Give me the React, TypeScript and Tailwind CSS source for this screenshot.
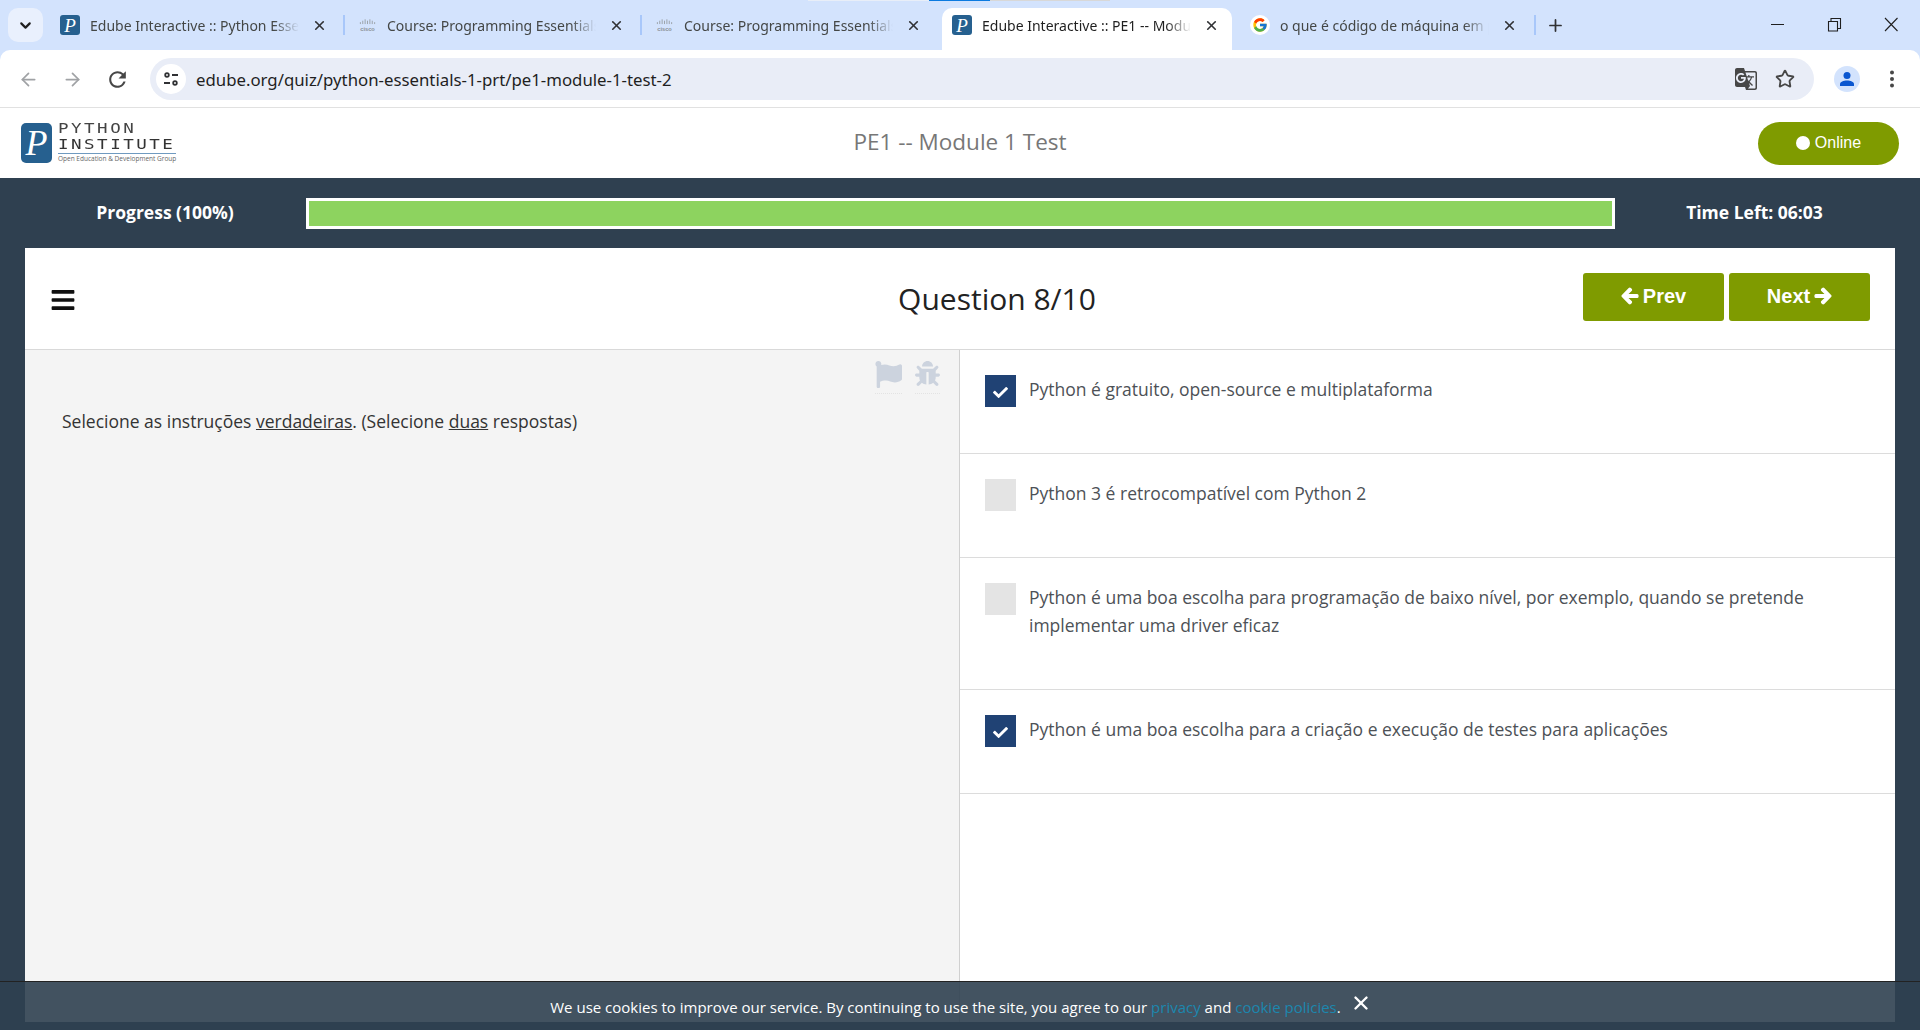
import { ArrowLeft, ArrowRight, ChevronDown, Plus, Star, X } from "lucide-react";
import { FaArrowLeft, FaArrowRight, FaBars, FaBug, FaCheck, FaFlag } from "react-icons/fa";
import { FcGoogle } from "react-icons/fc";
import { MdGTranslate, MdRefresh } from "react-icons/md";

const UI = "font-['Noto_Sans',sans-serif]";

function PyFavicon() {
  return (
    <div className="flex size-[20px] shrink-0 items-center justify-center rounded-[3px] bg-[#26608f]">
      <span className="font-['Liberation_Serif',serif] text-[19px] leading-none text-white italic">P</span>
    </div>
  );
}

function CiscoFavicon() {
  return (
    <svg width="19" height="14" viewBox="0 0 20 14" className="-ml-[1px] shrink-0">
      <g stroke="#9aa0a6" strokeWidth="1">
        <path d="M2.5 4v2M5 2.5v3.5M7.500 1v5M10 2.500v3.500M12.500 1v5M15 2.500v3.500M17.500 4v2" />
      </g>
      <text x="10" y="13" textAnchor="middle" fontSize="6" fontWeight="700" fill="#8a8f94" fontFamily="Liberation Sans, sans-serif">
        cisco
      </text>
    </svg>
  );
}

function GoogleFavicon() {
  return (
    <div className="ml-[4px] flex size-[20px] shrink-0 items-center justify-center rounded-full bg-white">
      <FcGoogle size={16} />
    </div>
  );
}

function Tab({ icon, title, width, active }: { icon: React.ReactNode; title: string; width: string; active?: boolean }) {
  return (
    <div className={`flex h-[42px] shrink-0 items-center pb-[8px] ${width} ${active ? "rounded-t-[10px] bg-white pl-[10px]" : "pl-[14px]"}`}>
      {icon}
      <span
        className={`ml-[10px] w-[209px] overflow-hidden text-[14px] whitespace-nowrap ${UI} [mask-image:linear-gradient(to_right,black_88%,transparent)] ${
          active ? "text-[#1f1f1f]" : "text-[#444746]"
        }`}
      >
        {title}
      </span>
      <X size={15} strokeWidth={2.6} className="ml-[13px] shrink-0 text-[#303134]" />
    </div>
  );
}

function TabStrip() {
  return (
    <div className="relative flex h-[50px] shrink-0 items-end bg-[#d3e3fd] pl-[8px]">
      <div className="absolute top-0 left-[808px] flex h-[1px]">
        <div className="w-[121px] bg-[#e8eef8]" />
        <div className="w-[61px] bg-[#0b7ae0]" />
        <div className="w-[120px] bg-[#d8d8d8]" />
      </div>
      <div className="mb-[8px] flex h-[34px] w-[35px] shrink-0 items-center justify-center rounded-[10px] bg-[#e9f0fd]">
        <ChevronDown size={17} strokeWidth={3} className="text-[#1f1f1f]" />
      </div>
      <div className="ml-[3px] flex items-end">
        <Tab icon={<PyFavicon />} title="Edube Interactive :: Python Essentials" width="w-[297px]" />
        <div className="mb-[15px] h-[20px] w-[2px] shrink-0 bg-[#a8c7fa]" />
        <Tab icon={<CiscoFavicon />} title="Course: Programming Essentials" width="w-[295px]" />
        <div className="mb-[15px] h-[20px] w-[2px] shrink-0 bg-[#a8c7fa]" />
        <Tab icon={<CiscoFavicon />} title="Course: Programming Essentials" width="w-[300px]" />
        <Tab icon={<PyFavicon />} title="Edube Interactive :: PE1 -- Module 1 Test" width="w-[290px]" active />
        <Tab icon={<GoogleFavicon />} title="o que é código de máquina em python" width="w-[302px]" />
        <div className="mb-[15px] h-[20px] w-[2px] shrink-0 bg-[#a8c7fa]" />
        <Plus size={19} strokeWidth={2.2} className="mb-[15px] ml-[10px] text-[#303134]" />
      </div>
      <div className="absolute top-0 right-0 flex h-[50px] items-center text-[#1f1f1f]">
        <svg width="56" height="50" viewBox="0 0 56 50" fill="none" stroke="currentColor">
          <path d="M21 24.500h13" />
        </svg>
        <svg width="56" height="50" viewBox="0 0 56 50" fill="none" stroke="currentColor" strokeWidth="1.100">
          <path d="M22.500 21.500h9v9.500h-9zM25 21.500v-3h9.500v10h-3" />
        </svg>
        <svg width="56" height="50" viewBox="0 0 56 50" fill="none" stroke="currentColor" strokeWidth="1.100" className="mr-[-2px] ml-[4px]">
          <path d="M19 18l12.500 13M31.500 18L19 31" />
        </svg>
      </div>
    </div>
  );
}

function Toolbar() {
  return (
    <div className="bg-[#d3e3fd]">
      <div className="flex h-[58px] items-center rounded-t-[10px] border-b border-[#e1e1e1] bg-white pt-[1px]">
        <ArrowLeft size={21} strokeWidth={2} className="ml-[18px] text-[#a0a2a5]" />
        <ArrowRight size={21} strokeWidth={2} className="ml-[23px] text-[#a0a2a5]" />
        <MdRefresh size={25} className="ml-[22px] text-[#474747]" />
        <div className="ml-[20px] flex h-[42px] w-[1664px] items-center rounded-full bg-[#e9edf7] pl-[6px]">
          <div className="flex size-[30px] items-center justify-center rounded-full bg-white">
            <svg width="16" height="16" viewBox="0 0 16 16" fill="none" stroke="#303134" strokeWidth="1.800">
              <circle cx="4" cy="4" r="1.800" />
              <path d="M9 4h6M1 12h6" />
              <circle cx="12" cy="12" r="1.800" />
            </svg>
          </div>
          <span className={`ml-[10px] pt-[1px] text-[16.800px] text-[#1f1f1f] ${UI}`}>edube.org/quiz/python-essentials-1-prt/pe1-module-1-test-2</span>
          <MdGTranslate size={24} className="mr-[17px] ml-auto text-[#474747]" />
          <Star size={20} strokeWidth={2.200} className="mr-[19px] text-[#474747]" />
        </div>
        <div className="ml-[20px] flex size-[26px] items-center justify-center rounded-full bg-[#d3e3fd]">
          <svg width="16" height="16" viewBox="0 0 16 16" fill="#0b57d0">
            <circle cx="8" cy="4.500" r="3.500" />
            <path d="M1 15v-2c0-2 3.500-3.500 7-3.500s7 1.500 7 3.500v2z" />
          </svg>
        </div>
        <svg width="6" height="18" viewBox="0 0 6 18" fill="#474747" className="ml-[29px]">
          <circle cx="3" cy="2.500" r="2" />
          <circle cx="3" cy="9" r="2" />
          <circle cx="3" cy="15.500" r="2" />
        </svg>
      </div>
    </div>
  );
}

function Logo() {
  return (
    <div className="flex items-center gap-[6px]">
      <div className="flex h-[40px] w-[31px] items-center justify-center rounded-[5px] bg-[#26608f]">
        <span className="font-['Liberation_Serif',serif] text-[36px] leading-none text-white italic">P</span>
      </div>
      <div className="w-[118px] pb-[3px]">
        <div className="origin-left scale-x-[1.25] font-['DejaVu_Sans_Mono',monospace] text-[14px] leading-[16px] tracking-[2px] whitespace-nowrap text-[#444]">PYTHON</div>
        <div className="origin-left scale-x-[1.25] font-['DejaVu_Sans_Mono',monospace] text-[14px] leading-[16px] tracking-[2px] whitespace-nowrap text-[#333]">INSTITUTE</div>
        <div className="mt-[1px] border-t border-[#6f9ac0] font-['Open_Sans',sans-serif] text-[6.500px] leading-[9px] whitespace-nowrap text-[#666]">
          Open Education &amp; Development Group
        </div>
      </div>
    </div>
  );
}

function Header() {
  return (
    <div className="flex h-[70px] shrink-0 items-center justify-between bg-white pr-[21px] pl-[21px]">
      <div className="w-[300px]">
        <Logo />
      </div>
      <h1 className="pb-[2px] font-['Open_Sans',sans-serif] text-[22.500px] text-[#777]">PE1 -- Module 1 Test</h1>
      <div className="flex w-[300px] justify-end">
        <div className="flex h-[43px] w-[141px] items-center justify-center gap-[5px] rounded-full bg-[#7f9b00] font-['Liberation_Sans',sans-serif] text-[16px] text-white">
          <span className="size-[14px] rounded-full bg-white" />
          Online
        </div>
      </div>
    </div>
  );
}

function ProgressBar() {
  return (
    <div className="flex h-[70px] shrink-0 items-center font-['Open_Sans',sans-serif] text-[17.500px] font-bold text-white">
      <div className="w-[306px] pb-[2px] pl-[24px] text-center">Progress (100%)</div>
      <div className="h-[31px] flex-1 border-[3px] border-white bg-[#8dd35f]" />
      <div className="w-[305px] pr-[26px] pb-[2px] text-center">Time Left: 06:03</div>
    </div>
  );
}

function NavButton({ children }: { children: React.ReactNode }) {
  return (
    <button className="flex h-[48px] w-[141px] items-center justify-center gap-[4px] rounded-[3px] bg-[#7f9b00] pb-[2px] font-['Liberation_Sans',sans-serif] text-[20px] font-bold text-white">
      {children}
    </button>
  );
}

const answers = [
  { text: "Python é gratuito, open-source e multiplataforma", checked: true, height: "h-[104px]" },
  { text: "Python 3 é retrocompatível com Python 2", checked: false, height: "h-[104px]" },
  {
    text: "Python é uma boa escolha para programação de baixo nível, por exemplo, quando se pretende implementar uma driver eficaz",
    checked: false,
    height: "h-[132px]",
  },
  { text: "Python é uma boa escolha para a criação e execução de testes para aplicações", checked: true, height: "h-[104px]" },
];

function QuizCard() {
  return (
    <div className="mx-[25px] mb-[8px] flex min-h-0 flex-1 flex-col bg-white font-['Open_Sans',sans-serif]">
      <div className="flex h-[102px] shrink-0 items-center border-b border-[#d9d9d9] px-[25px] pb-[3px]">
        <FaBars size={26} className="mt-[5px] text-[#111]" />
        <h2 className="flex-1 pt-[3px] pl-[335px] text-center text-[30px] text-[#222]">Question 8/10</h2>
        <div className="flex gap-[5px]">
          <NavButton>
            <FaArrowLeft size={18} stroke="currentColor" strokeWidth={40} />
            Prev
          </NavButton>
          <NavButton>
            Next
            <FaArrowRight size={18} stroke="currentColor" strokeWidth={40} />
          </NavButton>
        </div>
      </div>
      <div className="flex min-h-0 flex-1">
        <div className="relative w-[935px] shrink-0 border-r border-[#d0d0d0] bg-[#f4f4f4] pt-[56px] pl-[37px] text-[17.500px] leading-[30px] text-[#333]">
          <div className="absolute top-[11px] right-[19px] flex gap-[13px] text-[#ccd3de]">
            <div className="border-b border-dotted border-[#e3e3e3] pb-[5px]">
              <FaFlag size={27} />
            </div>
            <div className="border-b border-dotted border-[#e3e3e3] pb-[5px]">
              <FaBug size={25} />
            </div>
          </div>
          <p>
            Selecione as instruções <u>verdadeiras</u>. (Selecione <u>duas</u> respostas)
          </p>
        </div>
        <div className="flex-1">
          {answers.map((a) => (
            <div key={a.text} className={`flex gap-[13px] border-b border-[#dcdcdc] pt-[25px] pr-[50px] pl-[25px] ${a.height}`}>
              <div className={`flex h-[32px] w-[31px] shrink-0 items-center justify-center ${a.checked ? "bg-[#204274]" : "bg-[#e4e4e4]"}`}>
                {a.checked && <FaCheck size={15} className="mt-[2px] text-white" />}
              </div>
              <span className="text-[17.500px] leading-[28px] text-[#4d5156]">{a.text}</span>
            </div>
          ))}
        </div>
      </div>
    </div>
  );
}

function CookieBar() {
  return (
    <div className="absolute right-0 bottom-0 left-0 flex h-[49px] justify-center border-t border-[#222] bg-[#2f4050]/90 pt-[12px] pl-[2px] font-['Open_Sans',sans-serif] text-[15px] text-white">
      <p className="leading-[26px]">
        We use cookies to improve our service. By continuing to use the site, you agree to our <span className="text-[#1c87ae]">privacy</span> and{" "}
        <span className="text-[#1c87ae]">cookie policies</span>.
      </p>
      <X size={22} strokeWidth={2.600} className="mt-[-2px] ml-[9px]" />
    </div>
  );
}

export default function App() {
  return (
    <div className="relative flex h-screen flex-col overflow-hidden bg-[#2f4050]">
      <TabStrip />
      <Toolbar />
      <Header />
      <ProgressBar />
      <QuizCard />
      <CookieBar />
    </div>
  );
}
